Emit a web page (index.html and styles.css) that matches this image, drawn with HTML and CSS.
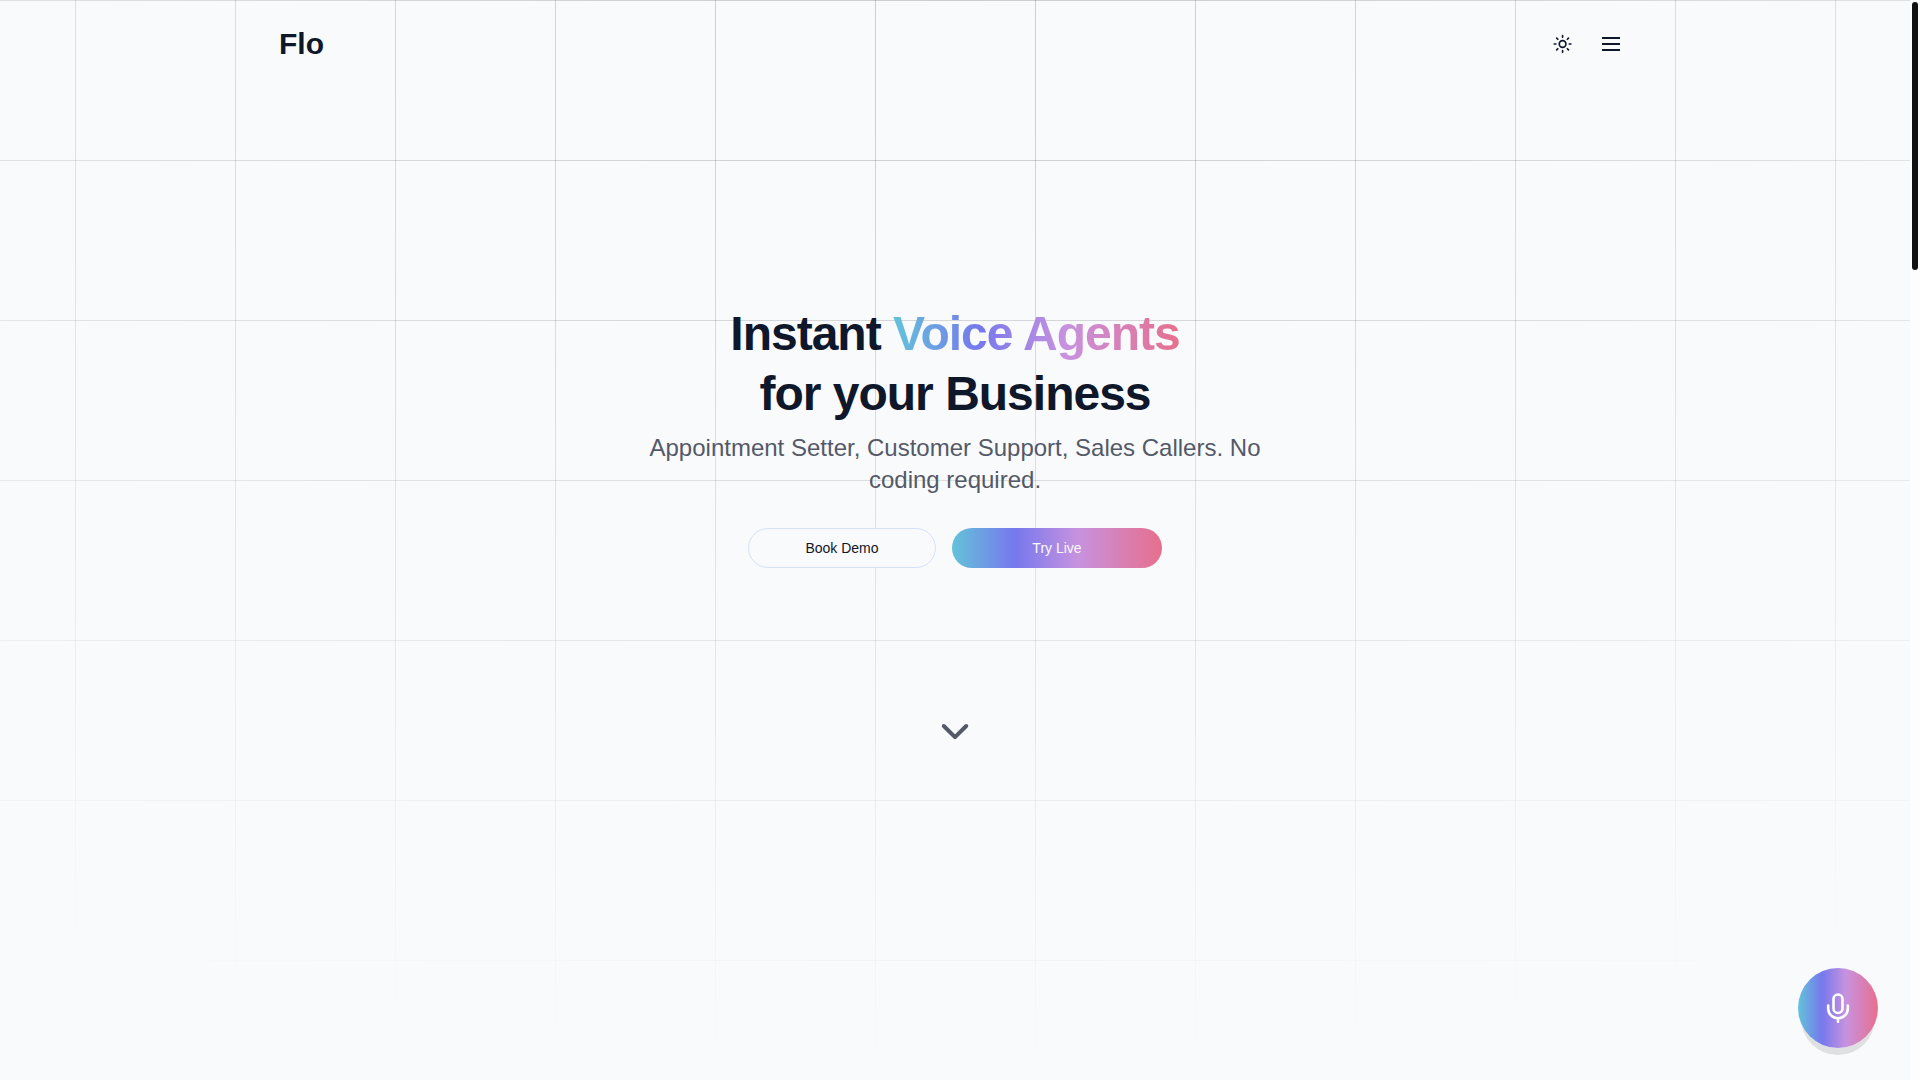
FILE: index.html
```html
<!DOCTYPE html>
<html lang="en">
<head>
    <meta charset="UTF-8">
    <meta name="viewport" content="width=device-width, initial-scale=1.0">
    <title>Flo</title>
    <link rel="stylesheet" href="styles.css">
</head>
<body>
    <div class="page">
        <header class="navbar">
            <a class="logo" href="#">Flo</a>
            <nav class="nav-actions">
                <button class="icon-button" type="button" aria-label="Toggle theme">
                    <svg width="20" height="20" viewBox="0 0 24 24" fill="none" stroke="currentColor" stroke-width="2" stroke-linecap="round">
                        <circle cx="11.5" cy="12" r="4"/>
                        <path d="M11.5 2v2M11.5 20v2M4.4 4.9l1.4 1.4M17.2 17.7l1.4 1.4M1.5 12h2M19.5 12h2M5.8 17.7l-1.4 1.4M18.6 4.9l-1.4 1.4"/>
                    </svg>
                </button>
                <button class="icon-button" type="button" aria-label="Open menu">
                    <svg width="24" height="24" viewBox="0 0 24 24" fill="none" stroke="currentColor" stroke-width="2">
                        <path d="M3 6h18M3 12h18M3 18h18"/>
                    </svg>
                </button>
            </nav>
        </header>

        <main class="hero">
            <h1>Instant <span class="gradient-text">Voice Agents</span><br>for your Business</h1>
            <p class="subtitle">Appointment Setter, Customer Support, Sales Callers. No coding required.</p>
            <div class="hero-buttons">
                <button class="btn btn-outline" type="button">Book Demo</button>
                <button class="btn btn-gradient" type="button">Try Live</button>
            </div>
            <a class="scroll-down" href="#" aria-label="Scroll down">
                <svg width="48" height="48" viewBox="0 0 24 24" fill="none" stroke="currentColor" stroke-width="2" stroke-linecap="round" stroke-linejoin="round">
                    <path d="M6.4 10l5.6 5.6 5.6-5.6"/>
                </svg>
            </a>
        </main>

        <button class="mic-button" type="button" aria-label="Talk to an agent">
            <svg width="32" height="32" viewBox="0 0 32 32" fill="none" stroke="currentColor" stroke-width="2.6" stroke-linecap="round" stroke-linejoin="round">
                <rect x="11.5" y="2.5" width="9" height="18.5" rx="4.5"/>
                <path d="M6.2 13.5v3a9.8 9.8 0 0 0 19.6 0v-3M16 26.3v3.5"/>
            </svg>
        </button>
    </div>

    <!-- custom scrollbar -->
    <div class="scroll-track">
        <div class="scroll-thumb"></div>
    </div>
</body>
</html>
```
FILE: styles.css
```css
:root {
    --gradient: linear-gradient(90deg, #63c3d9 0%, #7678ed 30%, #c792df 60%, #e76f8d 100%);
}

* {
    box-sizing: border-box;
}

body {
    display: flex;
    min-height: 100vh;
    margin: 0;
    font-family: "Liberation Sans", Arial, sans-serif;
    background-color: #f9fafc;
    color: #0f172a;
}

.page {
    position: relative;
    flex: 1;
    display: flex;
    flex-direction: column;
}

/* Grid lines, fading out from the top center */
.page::before {
    content: "";
    position: absolute;
    inset: 0;
    z-index: -1;
    background-image:
        linear-gradient(90deg, rgba(0, 0, 0, 0.2) 1px, transparent 1px),
        linear-gradient(rgba(0, 0, 0, 0.2) 1px, transparent 1px);
    background-size: 160px 160px;
    background-position: top center;
    mask-image: radial-gradient(100% 100% at top center, rgba(0, 0, 0, 0.9), rgba(0, 0, 0, 0.7) 30%, transparent);
}

.navbar {
    display: flex;
    justify-content: space-between;
    align-items: center;
    width: 100%;
    max-width: 1400px;
    height: 88px;
    margin: 0 auto;
    padding: 0 24px;
}

.logo {
    font-size: 30px;
    font-weight: bold;
    color: inherit;
    text-decoration: none;
}

.nav-actions {
    display: flex;
    align-items: center;
    gap: 8px;
}

.icon-button {
    display: flex;
    justify-content: center;
    align-items: center;
    width: 40px;
    height: 40px;
    padding: 0;
    background: none;
    border: none;
    color: inherit;
    cursor: pointer;
}

.hero {
    display: flex;
    flex-direction: column;
    align-items: center;
    padding: 216px 24px 0;
    text-align: center;
}

h1 {
    margin: 0;
    font-size: 48px;
    font-weight: bold;
    line-height: 60px;
    letter-spacing: -1px;
}

.gradient-text {
    background: var(--gradient);
    background-clip: text;
    -webkit-background-clip: text;
    color: transparent;
}

.subtitle {
    max-width: 640px;
    margin: 8px 0 0;
    font-size: 24px;
    line-height: 32px;
    color: #545968;
}

.hero-buttons {
    display: flex;
    gap: 16px;
    margin-top: 32px;
}

.btn {
    height: 40px;
    border: none;
    border-radius: 20px;
    font-family: inherit;
    font-size: 14px;
    cursor: pointer;
}

.btn-outline {
    width: 188px;
    border: 1px solid #d5e2f8;
    background-color: #f9fafc;
    color: #0f172a;
}

.btn-gradient {
    width: 210px;
    background: var(--gradient);
    color: #f8fafc;
}

.scroll-down {
    display: flex;
    margin-top: 138px;
    color: #545968;
}

.mic-button {
    position: fixed;
    right: 42px;
    bottom: 32px;
    display: flex;
    justify-content: center;
    align-items: center;
    width: 80px;
    height: 80px;
    padding: 0;
    border: none;
    border-radius: 50%;
    background: var(--gradient);
    box-shadow: 0 10px 0 -3px #dfe0e2;
    color: #fff;
    cursor: pointer;
}

.scroll-track {
    width: 10px;
    padding: 2px;
    background-color: #fdfdfd;
}

.scroll-thumb {
    height: calc(25vh - 2px);
    border-radius: 3px;
    background-color: #111;
}
```
